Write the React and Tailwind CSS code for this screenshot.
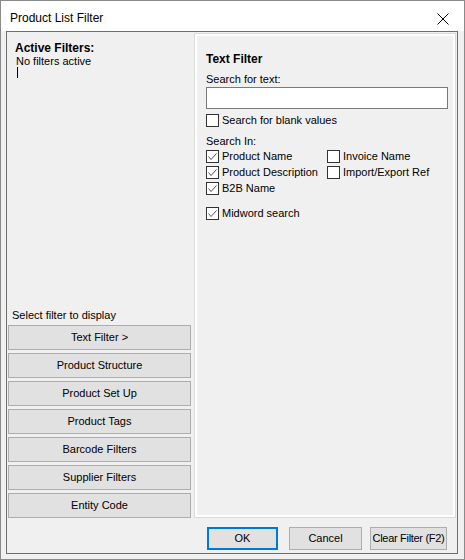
import React from 'react';

const filterButtons = [
  'Text Filter >',
  'Product Structure',
  'Product Set Up',
  'Product Tags',
  'Barcode Filters',
  'Supplier Filters',
  'Entity Code',
];

function CheckBox({ checked, label }) {
  return (
    <div className="flex h-[13px] items-center gap-[3px]">
      <span className="flex h-[13px] w-[13px] shrink-0 items-center justify-center border border-[#333333] bg-white">
        {checked && (
          <svg width="11" height="11" viewBox="0 0 11 11">
            <path d="M1.5 5.5 L4 8.5 L9.5 2.5" fill="none" stroke="#555555" strokeWidth="1" />
          </svg>
        )}
      </span>
      <span className="whitespace-nowrap leading-[13px]">{label}</span>
    </div>
  );
}

export default function App() {
  return (
    <div className="h-[560px] w-[465px] border border-[#8a8a8a] bg-[#f0f0f0] font-['Liberation_Sans',Arial,sans-serif] text-[11px] text-black">
      {/* title bar */}
      <div className="relative flex h-[30px] items-center bg-white pl-[9px] pt-[3px] text-[12px]">
        <span>Product List Filter</span>
        <svg className="absolute left-[436px] top-[12px]" width="12" height="12" viewBox="0 0 12 12">
          <path d="M0.5 0.5 L11.5 11.5 M11.5 0.5 L0.5 11.5" stroke="#000" strokeWidth="1" />
        </svg>
      </div>

      <div className="ml-[5px] flex h-[523px] w-[452px] flex-col border border-[#6e6e6e]">
        <div className="flex h-[486px]">
          {/* left column */}
          <div className="flex w-[187px] flex-col">
            <div className="flex-1 pl-[8px] pt-[9px]">
              <div className="text-[12px] font-bold leading-[14px]">Active Filters:</div>
              <div className="mt-[1px] pl-[1px] leading-[11px]">No filters active</div>
              <div className="ml-[2px] h-[11px] w-[1px] bg-black" />
            </div>
            <div className="pl-[5px] leading-[13px]">Select filter to display</div>
            <div className="mt-[3px] flex flex-col gap-[3px] pl-[1px]">
              {filterButtons.map((b) => (
                <div
                  key={b}
                  className="flex h-[25px] w-[183px] items-center justify-center border border-[#adadad] bg-[#e1e1e1]"
                >
                  {b}
                </div>
              ))}
            </div>
          </div>

          {/* text filter panel */}
          <div className="mt-[1px] h-[485px] w-[262px] border border-[#dadada]">
            <div className="h-full border-2 border-white px-[9px] pt-[16px]">
              <div className="text-[12px] font-bold leading-[14px]">Text Filter</div>
              <div className="mt-[7px] leading-[13px]">Search for text:</div>
              <div className="mt-[1px] h-[22px] w-[242px] border border-[#7a7a7a] bg-white" />
              <div className="mt-[5px]">
                <CheckBox label="Search for blank values" />
              </div>
              <div className="mt-[8px] leading-[13px]">Search In:</div>
              <div className="mt-[2px] grid grid-cols-[121px_auto] gap-y-[3px]">
                <CheckBox checked label="Product Name" />
                <CheckBox label="Invoice Name" />
                <CheckBox checked label="Product Description" />
                <CheckBox label="Import/Export Ref" />
                <CheckBox checked label="B2B Name" />
              </div>
              <div className="mt-[12px]">
                <CheckBox checked label="Midword search" />
              </div>
            </div>
          </div>
        </div>

        {/* dialog buttons */}
        <div className="flex pl-[200px] pt-[9px]">
          <div className="flex h-[23px] w-[71px] items-center justify-center border-2 border-[#0078d7] bg-[#e1e1e1]">
            OK
          </div>
          <div className="ml-[11px] flex h-[23px] w-[73px] items-center justify-center border border-[#adadad] bg-[#e1e1e1]">
            Cancel
          </div>
          <div className="ml-[8px] flex h-[23px] w-[77px] items-center justify-center whitespace-nowrap border border-[#adadad] bg-[#e1e1e1] tracking-[-0.3px]">
            Clear Filter (F2)
          </div>
        </div>
      </div>
    </div>
  );
}
